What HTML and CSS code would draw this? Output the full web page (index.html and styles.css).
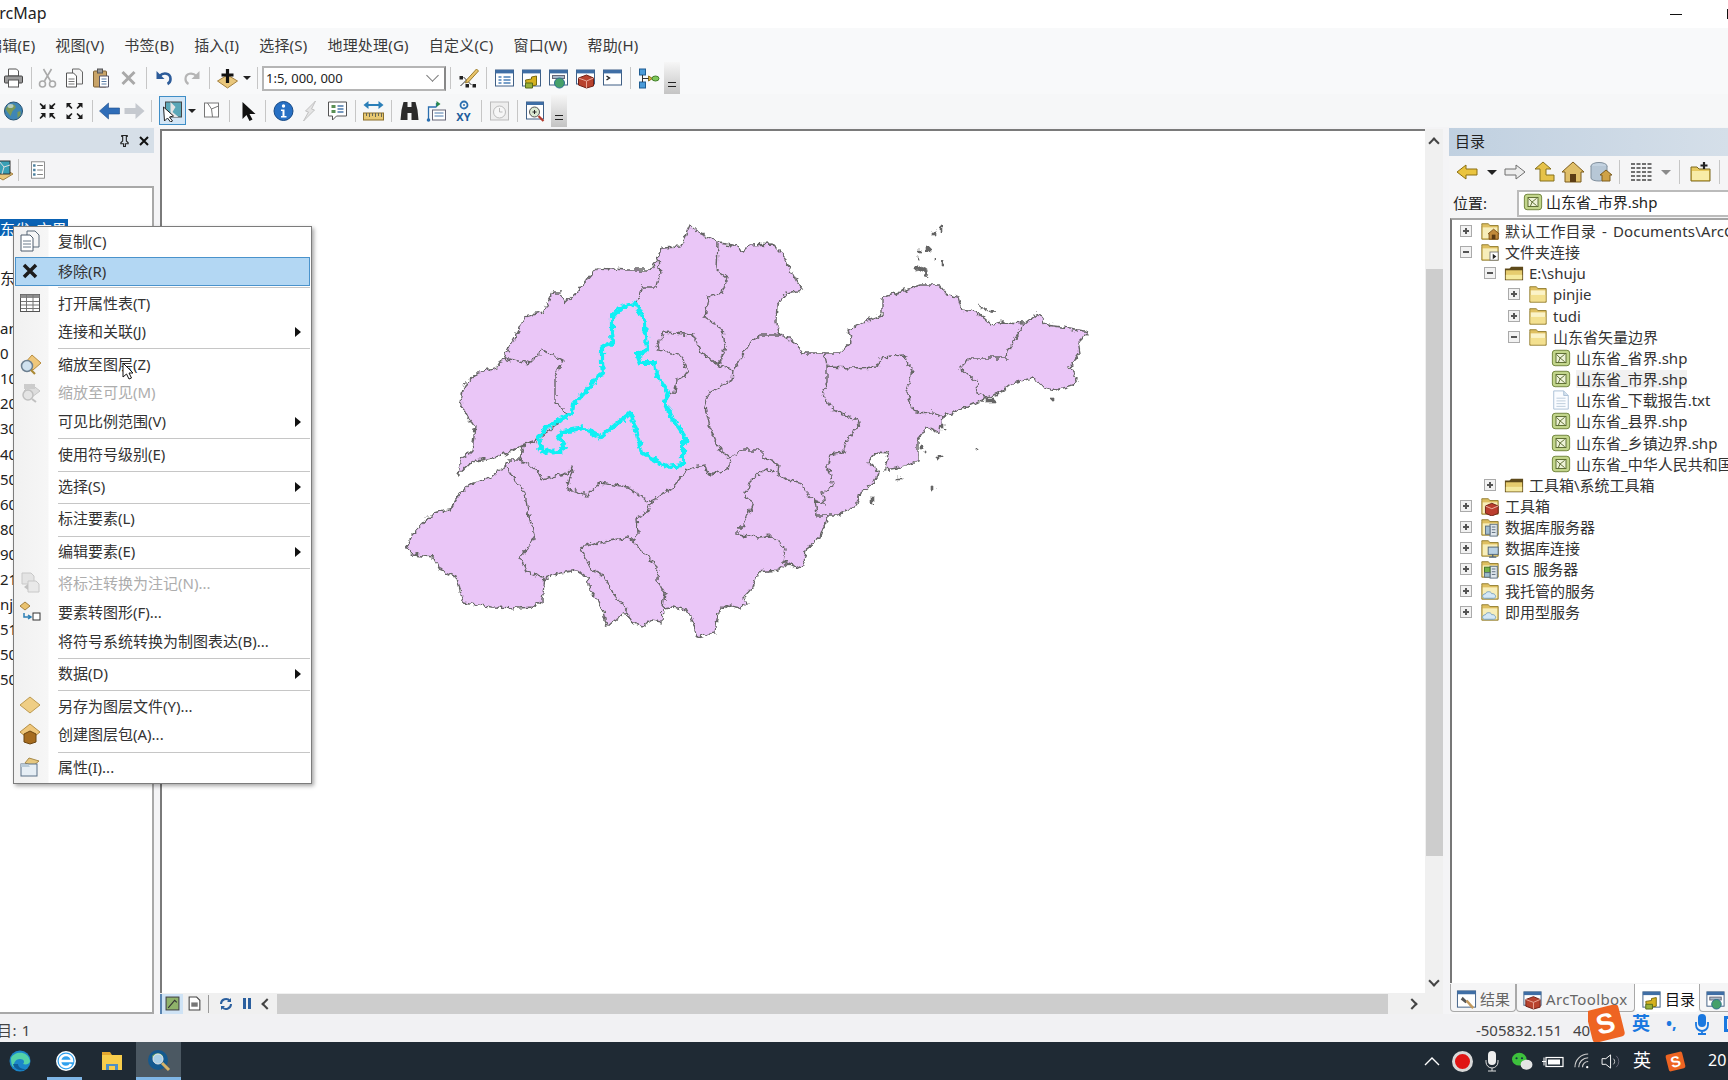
FILE: index.html
```html
<!DOCTYPE html>
<html lang="zh-CN">
<head>
<meta charset="utf-8">
<title>ArcMap</title>
<link rel="stylesheet" href="styles.css">
</head>
<body>
<svg class="defs" width="0" height="0" aria-hidden="true">
<defs>
<filter id="rough" x="-2%" y="-2%" width="104%" height="104%" color-interpolation-filters="sRGB"><feTurbulence type="fractalNoise" baseFrequency="0.2" numOctaves="2" seed="7" result="n"/><feDisplacementMap in="SourceGraphic" in2="n" scale="7" xChannelSelector="R" yChannelSelector="G"/><feGaussianBlur stdDeviation="0.35"/></filter>
<symbol id="print" viewBox="0 0 22 22"><path d="M6 2h8l2 2v5H6z" fill="#fff" stroke="#555"/><rect x="2" y="9" width="18" height="7" rx="1" fill="#9b9b9b" stroke="#444"/><rect x="6" y="13" width="10" height="7" fill="#fff" stroke="#555"/></symbol>
<symbol id="cut" viewBox="0 0 22 22"><path d="M7 2l7 12M15 2L8 14" stroke="#aaa" stroke-width="1.600" fill="none"/><circle cx="6" cy="17" r="3" fill="none" stroke="#aaa" stroke-width="1.600"/><circle cx="16" cy="17" r="3" fill="none" stroke="#aaa" stroke-width="1.600"/></symbol>
<symbol id="copy" viewBox="0 0 22 22"><path d="M9 2h7l3 3v12H9z" fill="#f4f4f4" stroke="#666"/><path d="M3 6h7l3 3v11H3z" fill="#fff" stroke="#555"/><path d="M5 12h6M5 14.500h6M5 17h6" stroke="#777"/></symbol>
<symbol id="paste" viewBox="0 0 22 22"><rect x="3" y="4" width="13" height="16" rx="1" fill="#c9a468" stroke="#7a5f35"/><rect x="7" y="2" width="5" height="4" fill="#999" stroke="#555"/><path d="M9 9h9v11H9z" fill="#fff" stroke="#556"/><path d="M11 12h5M11 14.500h5M11 17h5" stroke="#5b7da6"/></symbol>
<symbol id="del" viewBox="0 0 22 22"><path d="M5 5l12 12M17 5L5 17" stroke="#a9a9a9" stroke-width="3"/></symbol>
<symbol id="undo" viewBox="0 0 22 22"><path d="M6 9c4-4 11-3 11 3 0 2-1 4-3 5" fill="none" stroke="#2d5c9a" stroke-width="2.600"/><path d="M3 4v8h8z" fill="#2d5c9a"/></symbol>
<symbol id="redo" viewBox="0 0 22 22"><path d="M16 9c-4-4-11-3-11 3 0 2 1 4 3 5" fill="none" stroke="#b5b5b5" stroke-width="2.200"/><path d="M19 4v8h-8z" fill="#b5b5b5"/></symbol>
<symbol id="add" viewBox="0 0 22 22"><path d="M11 8l10 6-10 7L1 14z" fill="#e9c77c" stroke="#a5813f"/><path d="M11 2v14M5 8h12" stroke="#111" stroke-width="3.200"/></symbol>
<symbol id="edit" viewBox="0 0 22 22"><path d="M3 19L9 13l5 5M9 13l-3-3" stroke="#333" fill="none"/><rect x="2" y="9" width="3.500" height="3.500" fill="#222"/><rect x="8" y="17" width="3.500" height="3.500" fill="#222"/><rect x="15" y="17" width="3.500" height="3.500" fill="#222"/><path d="M19 2L9 13l-1 3 3-1L21 4z" fill="#e9c46a" stroke="#9b7d2e"/></symbol>
<symbol id="win1" viewBox="0 0 22 22"><rect x="2" y="3" width="18" height="16" fill="#fff" stroke="#3f5f85"/><rect x="2" y="3" width="18" height="3.400" fill="#3f6ea5"/><path d="M5 10h3M5 13h3M5 16h3M10 10h7M10 13h7M10 16h7" stroke="#4b80b8" stroke-width="1.400"/></symbol>
<symbol id="win2" viewBox="0 0 22 22"><rect x="2" y="3" width="18" height="16" fill="#fff" stroke="#3f5f85"/><rect x="2" y="3" width="18" height="3.400" fill="#3f6ea5"/><path d="M6 20l-1-7 6-1v-2l5-1v9z" fill="#d6b21e" stroke="#7a6b10"/><path d="M5 16h7v5H5z" fill="#97b13a" stroke="#566b1c"/></symbol>
<symbol id="win3" viewBox="0 0 22 22"><rect x="2" y="3" width="18" height="15" fill="#fff" stroke="#3f5f85"/><rect x="2" y="3" width="18" height="3.400" fill="#3f6ea5"/><rect x="5" y="8.500" width="12" height="3" fill="#a8b8c8" stroke="#667"/><circle cx="12" cy="16" r="5" fill="#45a06a" stroke="#2c6e8e"/></symbol>
<symbol id="win4" viewBox="0 0 22 22"><rect x="2" y="3" width="18" height="14" fill="#fff" stroke="#3f5f85"/><rect x="2" y="3" width="18" height="3.400" fill="#3f6ea5"/><path d="M4 11l8-3 7 3v8l-7 2-8-3z" fill="#b8432f" stroke="#6f2016"/><path d="M4 11l8 3 7-3M12 14v7" stroke="#e8a899" fill="none"/></symbol>
<symbol id="win5" viewBox="0 0 22 22"><rect x="2" y="3" width="18" height="15" fill="#fff" stroke="#3f5f85"/><rect x="2" y="3" width="18" height="3.400" fill="#3f6ea5"/><path d="M5 9l3 2-3 2" fill="none" stroke="#222" stroke-width="1.400"/></symbol>
<symbol id="model" viewBox="0 0 22 22"><rect x="2" y="2" width="6" height="6" fill="#4b9bd8" stroke="#1f5d92"/><rect x="2" y="15" width="6" height="6" fill="#4b9bd8" stroke="#1f5d92"/><path d="M11 9l4 2.500-4 2.500z" fill="#d9b53c" stroke="#8a6f1c"/><ellipse cx="18" cy="11.500" rx="3.500" ry="2.500" fill="#7ec75a" stroke="#43802a"/><path d="M5 8v7M5 11.500h6" stroke="#333"/></symbol>
<symbol id="globe" viewBox="0 0 22 22"><circle cx="11" cy="11" r="9" fill="#3f86b5" stroke="#25506f"/><path d="M6 5c4-2 8 0 7 3l-3 3-2 5-3-4-2-3zM15 12l3-1v4l-3 3z" fill="#7c9a57"/><ellipse cx="8" cy="6" rx="3" ry="2" fill="#cfe3ee" opacity=".7"/></symbol>
<symbol id="zin" viewBox="0 0 22 22"><path d="M9 9H4l1.800-1.800L3 4l1-1 3.200 2.800L9 4zM13 9h5l-1.800-1.800L19 4l-1-1-3.200 2.800L13 4zM9 13H4l1.800 1.800L3 18l1 1 3.200-2.800L9 18zM13 13h5l-1.800 1.800L19 18l-1 1-3.200-2.800L13 18z" fill="#1c1c1c"/></symbol>
<symbol id="zout" viewBox="0 0 22 22"><path d="M3 3h5L6.200 4.800 9 8 8 9 4.800 6.200 3 8zM19 3h-5l1.800 1.800L13 8l1 1 3.200-2.800L19 8zM3 19h5l-1.800-1.800L9 14l-1-1-3.200 2.800L3 14zM19 19h-5l1.800-1.800L13 14l1-1 3.200 2.800L19 14z" fill="#1c1c1c"/></symbol>
<symbol id="back" viewBox="0 0 22 22"><path d="M1 11l9-8v5h11v6H10v5z" fill="#2f6db8" stroke="#1f4f8c" stroke-width=".6"/></symbol>
<symbol id="fwd" viewBox="0 0 22 22"><path d="M21 11l-9-8v5H1v6h11v5z" fill="#c5c9cf"/></symbol>
<symbol id="seltool" viewBox="0 0 22 22"><rect x="4" y="2" width="16" height="15" fill="#5aa7b8" stroke="#444"/><path d="M9 2l5 5-3 5 6 5H9z" fill="#e5e5e5"/><path d="M2 7l1 14 3-3 3 4 2-1-3-4 4-1z" fill="#fff" stroke="#222"/></symbol>
<symbol id="mapi" viewBox="0 0 22 22"><rect x="4" y="3" width="14" height="14" fill="#fff" stroke="#777"/><path d="M7 3l4 6 1 8M11 9l7-3" stroke="#777" fill="none"/></symbol>
<symbol id="ptr" viewBox="0 0 22 22"><path d="M6 2v17l4-4 3 6 3-1.500-3-5.500h6z" fill="#111"/></symbol>
<symbol id="info" viewBox="0 0 22 22"><circle cx="11" cy="11" r="9.500" fill="#2770c4" stroke="#174a86"/><circle cx="11" cy="6" r="1.700" fill="#fff"/><path d="M8.500 9.500h3.500V16h2v1.500H8.500V16h1.500v-5H8.500z" fill="#fff"/></symbol>
<symbol id="bolt" viewBox="0 0 22 22"><path d="M16 1L6 11l3 1-5 9 11-11-3-1z" fill="#e4e4e4" stroke="#c2c2c2"/></symbol>
<symbol id="popup" viewBox="0 0 22 22"><path d="M2 2h18v14H10l-4 4v-4H2z" fill="#fff" stroke="#555"/><path d="M5 5h4v3H5zM5 10h4v3H5z" fill="#5a8f55"/><path d="M11 6h6M11 9h6M11 12h6" stroke="#4a78ab" stroke-width="1.300"/></symbol>
<symbol id="measure" viewBox="0 0 22 22"><path d="M1 5l5-4v3h10V1l5 4-5 4V6H6v3z" fill="#2b7fb8"/><rect x="1" y="13" width="20" height="7" fill="#e7c872" stroke="#8a6f2b"/><path d="M4 13v3M7 13v4M10 13v3M13 13v4M16 13v3M19 13v4" stroke="#665"/></symbol>
<symbol id="bino" viewBox="0 0 22 22"><path d="M3 10l2-8h4v18H2zM19 10l-2-8h-4v18h7zM9 7h4v6H9z" fill="#2b2b2b"/></symbol>
<symbol id="route" viewBox="0 0 22 22"><rect x="7" y="10" width="13" height="10" fill="#fff" stroke="#667"/><path d="M9 13h9M9 16h9" stroke="#4a78ab"/><path d="M3 20V7h8M11 7V3" stroke="#2b6fb0" stroke-width="1.300" fill="none"/><circle cx="3" cy="20" r="1.800" fill="#2b6fb0"/><path d="M11 1l4 3-4 3z" fill="#2b8a4a"/></symbol>
<symbol id="clock" viewBox="0 0 22 22"><rect x="2" y="2" width="18" height="18" fill="#eee" stroke="#bbb"/><circle cx="11" cy="12" r="6" fill="#f6f6f6" stroke="#bbb"/><path d="M11 8v4h3" stroke="#bbb" fill="none"/></symbol>
<symbol id="zmap" viewBox="0 0 22 22"><rect x="2" y="2" width="17" height="17" fill="#fff" stroke="#3f5f85"/><rect x="2" y="2" width="17" height="3" fill="#3f6ea5"/><circle cx="10" cy="12" r="5" fill="#dbe9d2" stroke="#555"/><path d="M8 12h4M10 10v4" stroke="#222"/><path d="M14 16l5 5" stroke="#b43b2d" stroke-width="2.200"/></symbol>
<symbol id="toc1" viewBox="0 0 22 22"><path d="M11 9l10 6-10 6L1 15z" fill="#e9c77c" stroke="#a5813f"/><rect x="4" y="2" width="14" height="13" fill="#3aa0b6" stroke="#333"/><path d="M7 2l5 6-2 7M12 8l6-2" stroke="#ddd" fill="none"/></symbol>
<symbol id="toc2" viewBox="0 0 22 22"><rect x="3" y="1" width="16" height="20" fill="#fff" stroke="#777"/><rect x="5" y="4" width="3" height="3" fill="#4a7f9e"/><rect x="5" y="9.500" width="3" height="3" fill="#4a7f9e"/><rect x="5" y="15" width="3" height="3" fill="#4a7f9e"/><path d="M10 5.500h7M10 11h7M10 16.500h7" stroke="#666"/></symbol>
<symbol id="m-copy" viewBox="0 0 22 22"><path d="M8 1h8l4 4v12H8z" fill="#f6f6f6" stroke="#5a6a7a"/><path d="M2 5h9l3 3v13H2z" fill="#fff" stroke="#4e5d6c"/><path d="M4 11h8M4 14h8M4 17h8" stroke="#6a7a8a"/></symbol>
<symbol id="m-x" viewBox="0 0 22 22"><path d="M5 5l12 12M17 5L5 17" stroke="#1c1c1c" stroke-width="3.500"/></symbol>
<symbol id="m-table" viewBox="0 0 22 22"><rect x="1.500" y="2.500" width="19" height="17" fill="#fff" stroke="#555"/><rect x="1.500" y="2.500" width="19" height="3.500" fill="#8e8e8e"/><path d="M7.500 3v16M14 3v16M2 9.500h18M2 13h18M2 16.500h18" stroke="#777"/></symbol>
<symbol id="m-zoom" viewBox="0 0 22 22"><path d="M13 2l9 8-8 7-8-7z" fill="#efc77b" stroke="#b88d3f"/><circle cx="8" cy="13" r="5.500" fill="#cfe1ef" stroke="#6c7f90" stroke-width="1.500"/><path d="M12 17l4 4" stroke="#a83" stroke-width="2.200"/></symbol>
<symbol id="m-zoomg" viewBox="0 0 22 22"><path d="M12 3l9 7-8 6-8-6z" fill="#ddd" stroke="#c6c6c6"/><rect x="5" y="3" width="11" height="5" fill="#ccc"/><circle cx="9" cy="14" r="5" fill="#e4e4e4" stroke="#c0c0c0" stroke-width="1.500"/><path d="M13 18l4 3" stroke="#c0c0c0" stroke-width="2"/></symbol>
<symbol id="m-conv" viewBox="0 0 22 22"><path d="M3 1h9l3 3v8H3z" fill="#e4e4e4" stroke="#c8c8c8"/><path d="M9 9h8l3 3v8H9z" fill="#e9e9e9" stroke="#c8c8c8"/><path d="M5 15l4-3v6z" fill="#c2c2c2"/></symbol>
<symbol id="m-graphic" viewBox="0 0 22 22"><path d="M6 1l5 4-5 4-5-4z" fill="#eac26e" stroke="#a5813f"/><rect x="14" y="12" width="7" height="7" fill="#fff" stroke="#333"/><path d="M5 12v4h7M9 14l3 2-3 2" fill="none" stroke="#2c7fb5" stroke-width="1.500"/></symbol>
<symbol id="m-lyr" viewBox="0 0 22 22"><path d="M11 2l10 8-10 8L1 10z" fill="#efce85" stroke="#bd9a50"/></symbol>
<symbol id="m-pkg" viewBox="0 0 22 22"><path d="M11 1l10 8-10 8L1 9z" fill="#efc77b" stroke="#b58e44"/><path d="M5 11l6-3 6 3v8l-6 2-6-2z" fill="#a66c1f" stroke="#6b4410"/></symbol>
<symbol id="m-prop" viewBox="0 0 22 22"><path d="M10 2l10 3-6 5L6 7z" fill="#e7c87f" stroke="#a88a4a"/><rect x="2" y="8" width="16" height="12" fill="#e6eef5" stroke="#5a7187"/><path d="M2 8h7l2 3H2z" fill="#b9cbd9"/></symbol>
<symbol id="fold" viewBox="0 0 22 22"><path d="M2 5V3h7l2 2h9v15H2z" fill="#dfc061" stroke="#8f7a2c"/><rect x="3" y="7" width="16" height="12" fill="#fbf3c8"/><rect x="3" y="12" width="16" height="7" fill="#f3e08f"/></symbol>
<symbol id="fold-home" viewBox="0 0 22 22"><path d="M2 5V3h7l2 2h9v15H2z" fill="#dfc061" stroke="#8f7a2c"/><rect x="3" y="7" width="16" height="12" fill="#f7eeba"/><path d="M15 9l6 5-1 0v6h-10v-6H9z" fill="#c18a3a" stroke="#7a4d16"/><rect x="13" y="15" width="4" height="5" fill="#5a3a12"/></symbol>
<symbol id="fold-link" viewBox="0 0 22 22"><path d="M2 5V3h7l2 2h9v15H2z" fill="#dfc061" stroke="#8f7a2c"/><rect x="3" y="7" width="16" height="12" fill="#f7eeba"/><rect x="11" y="11" width="9" height="9" fill="#fff" stroke="#777"/><path d="M14 13l4 3-4 3z" fill="#222"/></symbol>
<symbol id="fold-conn" viewBox="0 0 22 22"><path d="M1 6h5l2-2h13v15H1z" fill="#5e4a1a"/><path d="M2 8h18v10H2z" fill="#e6cc6e"/><path d="M2 13h18v5H2z" fill="#f5ea9f"/></symbol>
<symbol id="fold-tool" viewBox="0 0 22 22"><path d="M2 5V3h7l2 2h9v15H2z" fill="#dfc061" stroke="#8f7a2c"/><rect x="3" y="7" width="16" height="12" fill="#f7eeba"/><path d="M6 11l7-3 7 3v8l-7 3-7-3z" fill="#bb3e2e" stroke="#6a1e14"/><path d="M6 11l7 3 7-3" stroke="#eba" fill="none"/></symbol>
<symbol id="fold-srv" viewBox="0 0 22 22"><path d="M2 5V3h7l2 2h9v15H2z" fill="#dfc061" stroke="#8f7a2c"/><rect x="3" y="7" width="16" height="12" fill="#f7eeba"/><rect x="11" y="8" width="8" height="13" fill="#dfe6ec" stroke="#596b7c"/><path d="M13 11h4M13 14h4M13 17h4" stroke="#567"/><rect x="6" y="10" width="5" height="9" fill="#9fbcd0" stroke="#596b7c"/></symbol>
<symbol id="fold-db" viewBox="0 0 22 22"><path d="M2 5V3h7l2 2h9v15H2z" fill="#dfc061" stroke="#8f7a2c"/><rect x="3" y="7" width="16" height="12" fill="#f7eeba"/><rect x="9" y="10" width="11" height="8" fill="#b9d1e4" stroke="#4c6175"/><path d="M14 18v3M10 21h8" stroke="#4c6175" stroke-width="1.400"/></symbol>
<symbol id="fold-gis" viewBox="0 0 22 22"><path d="M2 5V3h7l2 2h9v15H2z" fill="#dfc061" stroke="#8f7a2c"/><rect x="3" y="7" width="16" height="12" fill="#f7eeba"/><rect x="11" y="8" width="8" height="13" fill="#dfe6ec" stroke="#596b7c"/><path d="M13 11h4M13 14h4M13 17h4" stroke="#567"/><rect x="5" y="9" width="6" height="6" fill="#74b14a" stroke="#3d6f20"/><rect x="5" y="15" width="6" height="5" fill="#9bbccc" stroke="#596b7c"/></symbol>
<symbol id="fold-cloud" viewBox="0 0 22 22"><path d="M2 5V3h7l2 2h9v15H2z" fill="#dfc061" stroke="#8f7a2c"/><rect x="3" y="7" width="16" height="12" fill="#f7eeba"/><path d="M5 19c-3 0-3-5 1-5 1-3 6-3 7 0 4-1 6 5 2 5z" fill="#d4e8f7" stroke="#6e9cc0"/></symbol>
<symbol id="shp" viewBox="0 0 22 22"><rect x="1.500" y="2.500" width="19" height="17" rx="3" fill="#c2d58b" stroke="#6a7f34"/><rect x="5.500" y="6" width="11" height="10" fill="#eef3d8" stroke="#55662a"/><path d="M6 7l4 4 5-4M10 11l-2 5M10 11l5 4" stroke="#55662a" fill="none"/></symbol>
<symbol id="txt" viewBox="0 0 22 22"><path d="M3 1h11l5 5v15H3z" fill="#fafcff" stroke="#a7bdd4"/><path d="M14 1v5h5" fill="#d4e2ef" stroke="#a7bdd4"/><path d="M6 9h10M6 12h10M6 15h10M6 18h10" stroke="#b8c9da"/></symbol>
<symbol id="c-back" viewBox="0 0 24 22"><path d="M2 11l9-7v4h11v6H11v4z" fill="#eac43f" stroke="#8b6f12"/></symbol>
<symbol id="c-fwd" viewBox="0 0 24 22"><path d="M22 11l-9-7v4H2v6h11v4z" fill="#ececec" stroke="#6e6e6e"/></symbol>
<symbol id="c-up" viewBox="0 0 24 22"><path d="M10 1l8 7h-5v6h8v6H7V8H2z" fill="#e6c24a" stroke="#85701c"/></symbol>
<symbol id="c-home" viewBox="0 0 24 22"><path d="M12 1l11 10h-3v10H4V11H1z" fill="#e0bf6a" stroke="#7c5c1c"/><rect x="9" y="13" width="6" height="8" fill="#5c3d14"/></symbol>
<symbol id="c-db" viewBox="0 0 24 22"><ellipse cx="10" cy="5" rx="8" ry="3.500" fill="#c3d2e0" stroke="#7f8e9c"/><path d="M2 5v12c0 4 16 4 16 0V5" fill="#b7c7d6" stroke="#7f8e9c"/><path d="M17 9l6 5h-2v6h-8v-6h-2z" fill="#cfa247" stroke="#7c5c1c"/></symbol>
<symbol id="c-grid" viewBox="0 0 24 22"><path d="M1 3h22M1 7h22M1 11h22M1 15h22M1 19h22" stroke="#707070" stroke-width="2" stroke-dasharray="4 1.500"/></symbol>
<symbol id="c-new" viewBox="0 0 24 22"><path d="M2 8V6h6l2 2h11v12H2z" fill="#e7c95f" stroke="#7c681c"/><rect x="3" y="10" width="17" height="9" fill="#f8eca7"/><path d="M15 1v7M11.500 4.500h7" stroke="#222" stroke-width="2.200"/></symbol>
<symbol id="t-res" viewBox="0 0 22 22"><rect x="1.500" y="2" width="19" height="17" fill="#fff" stroke="#3f5f85"/><rect x="1.500" y="2" width="19" height="3.500" fill="#3f6ea5"/><path d="M7 8l5 5-2 2-5-4z" fill="#555"/><path d="M11 12l7 8" stroke="#c39a5e" stroke-width="2.600"/></symbol>
</defs>
</svg>

<div class="app">
  <header class="titlebar"><span class="app-name">ArcMap</span><i class="win-min"></i><i class="win-max"></i></header>

  <nav class="menubar">
    <span>编辑(E)</span><span>视图(V)</span><span>书签(B)</span><span>插入(I)</span><span>选择(S)</span><span>地理处理(G)</span><span>自定义(C)</span><span>窗口(W)</span><span>帮助(H)</span>
  </nav>

  <div class="toolbar">
    <svg class="i"><use href="#print"/></svg><b class="sep"></b>
    <svg class="i"><use href="#cut"/></svg><svg class="i"><use href="#copy"/></svg><svg class="i"><use href="#paste"/></svg><svg class="i"><use href="#del"/></svg><b class="sep"></b>
    <svg class="i"><use href="#undo"/></svg><svg class="i"><use href="#redo"/></svg><b class="sep"></b>
    <svg class="i"><use href="#add"/></svg><em class="drop"></em><b class="sep"></b>
    <div class="scale">1:5, 000, 000<span class="chev"></span></div><b class="sep"></b>
    <svg class="i"><use href="#edit"/></svg><b class="sep"></b>
    <svg class="i"><use href="#win1"/></svg><svg class="i"><use href="#win2"/></svg><svg class="i"><use href="#win3"/></svg><svg class="i"><use href="#win4"/></svg><svg class="i"><use href="#win5"/></svg><b class="sep"></b>
    <svg class="i"><use href="#model"/></svg><span class="grip"></span>
  </div>

  <div class="toolbar second">
    <svg class="i"><use href="#globe"/></svg><b class="sep"></b>
    <svg class="i"><use href="#zin"/></svg><svg class="i"><use href="#zout"/></svg><b class="sep"></b>
    <svg class="i narrow"><use href="#back"/></svg><svg class="i narrow"><use href="#fwd"/></svg><b class="sep"></b>
    <span class="active"><svg class="i"><use href="#seltool"/></svg></span><em class="drop"></em><svg class="i"><use href="#mapi"/></svg><b class="sep"></b>
    <svg class="i"><use href="#ptr"/></svg><b class="sep"></b>
    <svg class="i"><use href="#info"/></svg><svg class="i"><use href="#bolt"/></svg><svg class="i"><use href="#popup"/></svg><b class="sep"></b>
    <svg class="i"><use href="#measure"/></svg><b class="sep"></b>
    <svg class="i"><use href="#bino"/></svg><svg class="i"><use href="#route"/></svg><span class="xy"><svg viewBox="0 0 22 10"><circle cx="11" cy="5" r="3.500" fill="none" stroke="#2b6fb0" stroke-width="1.800"/><circle cx="11" cy="5" r="1" fill="#2b6fb0"/></svg>XY</span><b class="sep"></b>
    <svg class="i"><use href="#clock"/></svg><b class="sep"></b>
    <svg class="i"><use href="#zmap"/></svg><span class="grip"></span>
  </div>

  <div class="main">
    <aside class="toc">
      <div class="toc-title"><svg class="pin" viewBox="0 0 12 14"><path d="M3 1h6v1H8v5l2 2v1H7v3H5v-3H2V9l2-2V2H3z" fill="none" stroke="#222" stroke-width="1.200"/></svg><svg class="close" viewBox="0 0 12 12"><path d="M2 2l8 8M10 2l-8 8" stroke="#111" stroke-width="2"/></svg></div>
      <div class="toc-tools"><svg class="tocicon"><use href="#toc1"/></svg><b class="sep"></b><svg class="tocicon list"><use href="#toc2"/></svg></div>
      <div class="toc-tree">
        <div class="sel">东省_市界</div>
        <div class="lab first">东省</div>
        <div class="lab blank">and</div>
        <div class="lab">0</div><div class="lab">10</div><div class="lab">20</div><div class="lab">30</div><div class="lab">40</div><div class="lab">50</div><div class="lab">60</div><div class="lab">80</div><div class="lab">90</div><div class="lab">21</div>
        <div class="lab">nji</div><div class="lab">51_</div><div class="lab">50_</div><div class="lab">50_</div>
      </div>
    </aside>

    <section class="mapwrap">
      <div class="maprow">
        <div class="canvas">
          <svg class="map" viewBox="162 131 1263 862">
            <g filter="url(#rough)">
              <path class="land" d="M407 548 412 535 433 513 450 510 457 498 468 485 490 478 497 472 505 467 508 460 520 460 522 450 525 445 497 457 472 462 458 475 461 458 472 452 475 427 468 418 460 402 465 385 478 373 497 368 503 358 515 337 525 317 543 312 548 302 553 293 560 293 565 303 577 292 597 268 627 270 650 270 658 260 662 248 680 247 690 225 700 233 715 240 718 243 733 245 743 252 750 245 773 244 782 253 792 273 797 282 803 290 787 293 777 305 776 323 780 335 790 338 795 342 803 353 817 353 840 353 852 342 848 330 863 322 882 315 882 298 900 292 920 285 940 285 948 295 958 297 962 310 977 312 992 325 1002 322 1025 323 1038 313 1047 325 1070 328 1088 332 1078 342 1080 353 1070 367 1077 380 1073 385 1057 390 1043 387 1037 380 1032 378 1013 383 1000 393 987 397 978 402 942 417 940 433 927 427 918 440 918 462 897 468 885 470 888 453 877 452 868 462 880 472 873 483 860 493 857 505 838 515 828 515 820 537 807 548 803 565 797 568 787 563 778 570 758 572 753 587 743 598 748 603 740 608 727 605 718 612 715 633 697 637 693 622 687 610 673 607 663 608 662 622 652 620 642 627 632 622 627 612 615 620 607 627 603 612 598 600 590 590 588 578 577 570 560 573 545 578 542 600 533 607 518 608 493 607 463 603 457 577 440 570 433 557 413 555Z"/>
              <path class="border" d="M505 467 525 493 528 513 535 538 520 558 527 572 543 578M503 358 530 363 543 350 563 360 555 377 555 402 568 415 537 440 523 445M522 450 520 460 537 470 542 480 567 473 573 468 567 488 587 495 600 483 627 487 650 503 673 487 687 470 693 467 705 465 708 475 728 470 730 460M650 503 648 512 637 518 638 535 633 542 658 567 657 580 665 593 663 608M635 543 628 537 580 547 592 570 603 575 613 593 628 612M730 458 743 450 762 450 762 458 778 463 777 473 787 480 800 482 807 493 815 500 817 515 828 515M775 472 763 470 750 482 745 497 753 502 745 523 737 530 737 535 760 537 770 535 785 548 783 562 787 563M815 500 825 503 822 493 833 485 828 465 830 455 843 452 847 440 860 423 857 420 833 410 822 392 827 383 827 367 825 355 823 353M827 367 853 368 877 367 882 357 903 355 912 370 907 393 915 413 933 412 942 417M1025 323 1008 350 1007 358 970 358 960 368 977 383 978 393 987 397M718 243 717 270 727 278 722 293 708 297 705 317 723 330 725 347 720 362 717 365 733 370 732 380 710 392 705 407 710 427 720 450 730 458M780 335 760 335 750 343 740 360 733 370M637 303 642 287 657 287 660 273 658 260M657 345 665 332 693 335 700 350 717 365M657 345 658 350 680 355 688 373 677 380 675 392 667 393"/>
              <path class="islands" d="M940 226h2v6h-2zM932 232h4v3h-4zM926 246h4v6h-4zM918 250h2v2h-2zM918 257h1v4h-1zM935 257h1v3h-1zM941 261h2v3h-2zM915 268l7-2 4 2 2 8-3-1-3-5-7 1zM1051 398h3v3h-3zM977 448h1v3h-1zM938 456h3v2h-3zM931 486h3v3h-3zM871 497h3v7h-3zM897 478h5v2h-5zM925 451h2v2h-2zM920 446h2v3h-2zM941 424h3v3h-3zM944 429h2v2h-2zM986 398h8v5h-8zM978 305l7 3 3 3-5-2zM990 311h4l-3 3z"/>
              <path class="selection" d="M635 303 620 308 612 317 612 333 613 343 602 347 602 363 603 373 597 377 593 383 573 405 572 413 547 427 538 438 542 453 550 450 557 453 565 447 558 437 563 432 583 428 600 437 613 427 630 413 635 427 642 453 667 467 683 465 683 443 687 440 673 420 665 403 668 392 657 375 655 363 640 363 637 355 647 350 645 323 638 308Z"/>
            </g>
          </svg>
        </div>
        <div class="vscroll"><span class="arr up"></span><span class="thumb"></span><span class="arr down"></span></div>
      </div>
      <div class="mapbar">
        <span class="viewbtn on"><svg viewBox="0 0 14 14"><rect x="1" y="1" width="12" height="12" fill="#8fb26a" stroke="#444"/><path d="M3 11l6-7 2 2" stroke="#333" fill="none"/></svg></span>
        <span class="viewbtn"><svg viewBox="0 0 14 14"><path d="M2 1h7l3 3v9H2z" fill="#fff" stroke="#444"/><rect x="4" y="6" width="6" height="4" fill="#777"/></svg></span>
        <b class="sep tall"></b>
        <svg class="refresh" viewBox="0 0 14 14"><path d="M2 7a5 5 0 0 1 9-3M12 7a5 5 0 0 1-9 3" fill="none" stroke="#2b5f9e" stroke-width="2"/><path d="M12 1v4H8zM2 13V9h4z" fill="#2b5f9e"/></svg>
        <span class="pause"></span>
        <span class="harr left"></span>
        <span class="hthumb"></span>
        <span class="harr right"></span>
      </div>
    </section>

    <aside class="catalog">
      <div class="cat-title">目录</div>
      <div class="cat-tools">
        <svg class="c"><use href="#c-back"/></svg><em class="cdrop"></em><svg class="c"><use href="#c-fwd"/></svg><svg class="c up"><use href="#c-up"/></svg><svg class="c"><use href="#c-home"/></svg><svg class="c"><use href="#c-db"/></svg><b class="sep"></b><svg class="c grid"><use href="#c-grid"/></svg><em class="cdrop gray"></em><b class="sep"></b><svg class="c newf"><use href="#c-new"/></svg><b class="sep"></b>
      </div>
      <div class="cat-loc"><label>位置:</label><div class="locfield"><svg class="ti"><use href="#shp"/></svg>山东省_市界.shp</div></div>
      <div class="cat-tree">
        <div class="row l0 wide"><i class="ex plus"></i><svg class="ti"><use href="#fold-home"/></svg>默认工作目录 - Documents\ArcGIS</div>
        <div class="row l0"><i class="ex"></i><svg class="ti"><use href="#fold-link"/></svg>文件夹连接</div>
        <div class="row l1"><i class="ex"></i><svg class="ti"><use href="#fold-conn"/></svg>E:\shuju</div>
        <div class="row l2"><i class="ex plus"></i><svg class="ti"><use href="#fold"/></svg>pinjie</div>
        <div class="row l2"><i class="ex plus"></i><svg class="ti"><use href="#fold"/></svg>tudi</div>
        <div class="row l2"><i class="ex"></i><svg class="ti"><use href="#fold"/></svg>山东省矢量边界</div>
        <div class="row l3"><svg class="ti"><use href="#shp"/></svg>山东省_省界.shp</div>
        <div class="row l3"><svg class="ti"><use href="#shp"/></svg><span class="hl">山东省_市界.shp</span></div>
        <div class="row l3"><svg class="ti"><use href="#txt"/></svg>山东省_下载报告.txt</div>
        <div class="row l3"><svg class="ti"><use href="#shp"/></svg>山东省_县界.shp</div>
        <div class="row l3"><svg class="ti"><use href="#shp"/></svg>山东省_乡镇边界.shp</div>
        <div class="row l3"><svg class="ti"><use href="#shp"/></svg>山东省_中华人民共和国.shp</div>
        <div class="row l1"><i class="ex plus"></i><svg class="ti"><use href="#fold-conn"/></svg>工具箱\系统工具箱</div>
        <div class="row l0"><i class="ex plus"></i><svg class="ti"><use href="#fold-tool"/></svg>工具箱</div>
        <div class="row l0"><i class="ex plus"></i><svg class="ti"><use href="#fold-srv"/></svg>数据库服务器</div>
        <div class="row l0"><i class="ex plus"></i><svg class="ti"><use href="#fold-db"/></svg>数据库连接</div>
        <div class="row l0"><i class="ex plus"></i><svg class="ti"><use href="#fold-gis"/></svg>GIS 服务器</div>
        <div class="row l0"><i class="ex plus"></i><svg class="ti"><use href="#fold-cloud"/></svg>我托管的服务</div>
        <div class="row l0"><i class="ex plus"></i><svg class="ti"><use href="#fold-cloud"/></svg>即用型服务</div>
      </div>
      <div class="cat-tabs">
        <span class="tab t-res"><svg class="ti"><use href="#t-res"/></svg>结果</span>
        <span class="tab t-box"><svg class="ti"><use href="#win4"/></svg>ArcToolbox</span>
        <span class="tab cur"><svg class="ti"><use href="#win2"/></svg>目录</span>
        <span class="tab t-last"><svg class="ti"><use href="#win3"/></svg></span>
      </div>
    </aside>
  </div>

  <footer class="status"><span class="st-left">目: 1</span><span class="st-coord">-505832.151</span><span class="st-y">40</span></footer>

  <div class="taskbar">
    <span class="tk first"><svg viewBox="0 0 24 24"><circle cx="12" cy="12" r="10.500" fill="#1b86c9"/><path d="M3 9c3-7 17-8 19 3 0 3-4 4-7 3 2-2 1-5-3-5-5 0-7 5-6 8-2 0-3-4-3-9z" fill="#53d2a8"/><path d="M5 15c1 5 8 8 13 5-5 0-8-2-8-5z" fill="#0e5d99"/></svg></span>
    <span class="tk ul"><svg viewBox="0 0 24 24"><circle cx="12" cy="12" r="10" fill="#fff"/><circle cx="12" cy="12" r="8.500" fill="#2fa0ee"/><path d="M6 12h12c0-4-3-6-6-6s-6 2-6 6 3 6 6 6c2 0 4-1 5-3" fill="none" stroke="#fff" stroke-width="2.600"/></svg></span>
    <span class="tk"><svg viewBox="0 0 24 24"><path d="M2 6V3h8l2 3z" fill="#e4a72e"/><rect x="2" y="6" width="20" height="15" fill="#f7cd4c"/><rect x="6" y="15" width="12" height="6" fill="#4d8fc4"/><rect x="9" y="17" width="6" height="4" fill="#f7cd4c"/></svg></span>
    <span class="tk cur"><svg viewBox="0 0 24 24"><circle cx="11" cy="11" r="10" fill="#14598f"/><path d="M5 7c4-4 9-3 11 0l-3 3-2 5-4-3z" fill="#6fa968"/><circle cx="11" cy="10" r="5" fill="#a9cfe6" stroke="#e6e6e6"/><path d="M15 14l7 7" stroke="#d7b368" stroke-width="3"/></svg></span>
    <span class="tray">
      <svg class="t-caret" viewBox="0 0 16 10"><path d="M1 9l7-7 7 7" fill="none" stroke="#fff" stroke-width="1.400"/></svg>
      <span class="t-rec"></span>
      <svg class="t-mic" viewBox="0 0 16 22"><rect x="4" y="1" width="8" height="14" rx="4" fill="#eee"/><path d="M2 10v2a6 6 0 0 0 12 0v-2M8 18v3M4 21h8" fill="none" stroke="#ddd"/></svg>
      <svg class="t-wc" viewBox="0 0 24 22"><ellipse cx="9" cy="9" rx="8" ry="7" fill="#3dc03c"/><circle cx="6" cy="8" r="1.200" fill="#134"/><circle cx="12" cy="8" r="1.200" fill="#134"/><ellipse cx="17" cy="15" rx="6.500" ry="5.500" fill="#e4e4e4"/></svg>
      <svg class="t-bat" viewBox="0 0 22 12"><rect x="4" y="2" width="17" height="9" fill="none" stroke="#fff" stroke-width="1.200"/><rect x="6" y="4" width="12" height="5" fill="#fff"/><path d="M0 6h4M2 2v8" stroke="#fff"/></svg>
      <svg class="t-wifi" viewBox="0 0 18 18"><path d="M1 15a14 14 0 0 1 14-14M5 15a10 10 0 0 1 10-10M9 15a6 6 0 0 1 6-6" fill="none" stroke="#ccc" stroke-width="1.200"/><circle cx="14" cy="15" r="1.200" fill="#fff"/></svg>
      <svg class="t-vol" viewBox="0 0 22 18"><path d="M1 6h4l5-4v14l-5-4H1z" fill="none" stroke="#fff"/><path d="M13 6a4 4 0 0 1 0 6" fill="none" stroke="#ccc"/><path d="M16 3a8 8 0 0 1 0 12" fill="none" stroke="#667"/></svg>
      <span class="t-lang">英</span>
      <span class="sogou small">S</span>
      <span class="t-clock">20</span>
    </span>
  </div>
</div>

<div class="ctx">
  <div class="mi"><svg class="mic"><use href="#m-copy"/></svg>复制(C)</div>
  <div class="mi hot"><svg class="mic"><use href="#m-x"/></svg>移除(R)</div><hr>
  <div class="mi"><svg class="mic"><use href="#m-table"/></svg>打开属性表(T)</div>
  <div class="mi sub"><span class="mic"></span>连接和关联(J)</div><hr>
  <div class="mi"><svg class="mic"><use href="#m-zoom"/></svg>缩放至图层(Z)</div>
  <div class="mi off"><svg class="mic"><use href="#m-zoomg"/></svg>缩放至可见(M)</div>
  <div class="mi sub"><span class="mic"></span>可见比例范围(V)</div><hr>
  <div class="mi"><span class="mic"></span>使用符号级别(E)</div><hr>
  <div class="mi sub"><span class="mic"></span>选择(S)</div><hr>
  <div class="mi"><span class="mic"></span>标注要素(L)</div><hr>
  <div class="mi sub"><span class="mic"></span>编辑要素(E)</div><hr>
  <div class="mi off"><svg class="mic"><use href="#m-conv"/></svg>将标注转换为注记(N)...</div>
  <div class="mi"><svg class="mic"><use href="#m-graphic"/></svg>要素转图形(F)...</div>
  <div class="mi"><span class="mic"></span>将符号系统转换为制图表达(B)...</div><hr>
  <div class="mi sub"><span class="mic"></span>数据(D)</div><hr>
  <div class="mi"><svg class="mic"><use href="#m-lyr"/></svg>另存为图层文件(Y)...</div>
  <div class="mi"><svg class="mic"><use href="#m-pkg"/></svg>创建图层包(A)...</div><hr>
  <div class="mi"><svg class="mic"><use href="#m-prop"/></svg>属性(I)...</div>
</div>

<svg class="cursor" viewBox="0 0 12 18"><path d="M1 1v14l3.500-3 2.500 5 2.500-1-2.500-5H11z" fill="#fff" stroke="#111"/></svg>

<div class="ime">
  <span class="sogou">S</span>
  <span class="ime-lang">英</span>
  <span class="ime-punc">•,</span>
  <svg class="ime-mic" viewBox="0 0 16 22"><rect x="4" y="1" width="8" height="13" rx="4" fill="#1a78e0"/><path d="M2 9v3a6 6 0 0 0 12 0V9M8 18v3M4 21h8" fill="none" stroke="#1a78e0" stroke-width="1.800"/></svg>
  <span class="ime-last"></span>
</div>
</body>
</html>
```
FILE: styles.css
```css
* { box-sizing: border-box; }
html, body { margin: 0; height: 100%; }
body {
  width: 1728px; height: 1080px; overflow: hidden; position: relative;
  font: 15px/1.2 "Noto Sans", "Noto Sans CJK SC", sans-serif; color: #333; background: #f4f4f6;
}
.defs { position: absolute; }
.app { display: flex; flex-direction: column; width: 1728px; height: 1080px; }

/* title */
.titlebar { height: 28px; flex: none; background: #fff; display: flex; align-items: center; overflow: hidden; }
.app-name { margin-left: -11px; font-size: 16px; color: #222; }
.win-min { margin-left: auto; width: 12px; height: 1px; background: #111; }
.win-max { width: 10px; height: 10px; border: 1px solid #111; margin-left: 45px; margin-right: -9px; }

/* menu */
.menubar { height: 34px; flex: none; background: #f8f9fa; display: flex; align-items: center; gap: 20px; }
.menubar span { white-space: nowrap; color: #3a3a3a; letter-spacing: .2px; }
.menubar span:first-child { margin-left: -13px; }

/* toolbars */
.toolbar { height: 32px; flex: none; background: #f8f9fa; display: flex; align-items: center; }
.toolbar.second { height: 33px; background: #f6f7f8; }
.i { width: 27px; height: 22px; flex: none; }
.i.narrow { width: 25px; }
.sep { display: block; width: 1px; height: 22px; background: #c6c6c6; margin: 0 4px; flex: none; }
.toolbar .sep:first-of-type { margin-right: 2px; }
.drop { width: 12px; height: 22px; flex: none; position: relative; display: block; }
.drop::after { content: ""; position: absolute; left: 2px; top: 9px; border: 4px solid transparent; border-top: 4px solid #222; }
.scale { width: 184px; height: 25px; flex: none; background: #fff; border: 2px solid #b5b5b5; border-right-color: #888; padding-left: 2px; font-size: 13px; line-height: 21px; color: #222; display: flex; justify-content: space-between; }
.chev { width: 9px; height: 9px; border: solid #777; border-width: 0 1.500px 1.500px 0; transform: rotate(45deg); margin: 3px 7px 0 0; }
.grip { width: 16px; height: 32px; margin-left: 2px; align-self: flex-end; background: linear-gradient(#f6f6f6, #c4c4c4); position: relative; }
.grip::after { content: ""; position: absolute; left: 4px; bottom: 7px; width: 8px; height: 3px; border-top: 1px solid #222; border-bottom: 1px solid #222; }
.active { display: flex; width: 27px; height: 29px; margin-left: 3px; border: 1px solid #3f8ec7; background: #d3e6f6; align-items: center; justify-content: center; flex: none; }
.active .i { width: 23px; }
.xy { width: 27px; flex: none; text-align: center; color: #1f5c9c; font: 700 11px/11px "Noto Sans", sans-serif; }
.xy svg { display: block; width: 22px; height: 10px; margin: 0 auto 1px; }

/* main */
.main { flex: 1; min-height: 0; display: flex; }
.toc { width: 154px; flex: none; margin-right: 6px; display: flex; flex-direction: column; padding-top: 1px; }
.toc-title { height: 25px; flex: none; background: #d6dfe8; display: flex; align-items: center; justify-content: flex-end; gap: 8px; padding-right: 4px; }
.pin { width: 11px; height: 14px; }
.close { width: 12px; height: 12px; }
.toc-tools { height: 33px; flex: none; display: flex; align-items: center; }
.tocicon { width: 22px; height: 22px; flex: none; }
.tocicon:first-child { margin-left: -8px; }
.tocicon.list { width: 18px; height: 18px; margin-left: 6px; }
.toc .sep { margin: 0 4px; }
.toc-tree { flex: 1; background: #fff; border: 2px solid #a8a8a8; border-left: 0; overflow: hidden; width: 154px; line-height: 25.100px; color: #222; padding-top: 31px; }
.sel { width: 68px; height: 17px; line-height: 21px; background: #0a62b4; color: #fff; overflow: hidden; white-space: nowrap; }
.lab { height: 25.100px; white-space: nowrap; }
.lab.first { margin-top: 30px; }
.lab.blank { margin-top: 25px; }

/* map */
.mapwrap { flex: 1; min-width: 0; display: flex; flex-direction: column; padding-top: 2px; }
.maprow { height: 864px; flex: none; display: flex; }
.canvas { width: 1265px; height: 864px; flex: none; background: #fff; border-top: 2px solid #7a7a7a; border-left: 2px solid #7a7a7a; }
.map { display: block; width: 1263px; height: 862px; }
.land { fill: #eac6f7; stroke: #666; stroke-width: 1.400; }
.border { fill: none; stroke: #666; stroke-width: 1.400; }
.islands { fill: #666; stroke: #666; stroke-width: .6; }
.selection { fill: none; stroke: #0ff0f4; stroke-width: 4.200; stroke-linejoin: round; }
.vscroll { width: 18px; flex: none; background: #f0f0f0; display: flex; flex-direction: column; align-items: center; }
.arr { width: 8px; height: 8px; border: solid #444; border-width: 2px 0 0 2px; flex: none; }
.arr.up { transform: rotate(45deg); margin-top: 10px; }
.arr.down { transform: rotate(225deg); margin-bottom: 8px; }
.vscroll .thumb { width: 17px; background: #cdcdcd; height: 587px; flex: none; margin: 122px 0 auto; }
.mapbar { height: 21px; flex: none; display: flex; align-items: center; background: #f0f0f0; width: 1283px; }
.viewbtn { width: 23px; height: 20px; display: flex; align-items: center; justify-content: center; flex: none; }
.viewbtn.on { background: #cfe3f5; border-left: 2px solid #5a84b0; }
.viewbtn svg { width: 15px; height: 15px; }
.sep.tall { height: 18px; background: #999; margin: 0 10px 0 2px; }
.refresh { width: 14px; height: 14px; flex: none; }
.pause { width: 8px; height: 11px; margin-left: 10px; border: solid #2b5f9e; border-width: 0 3px; flex: none; }
.harr { width: 8px; height: 8px; border: solid #444; border-width: 2px 0 0 2px; flex: none; }
.harr.left { transform: rotate(-45deg); margin-left: 12px; }
.hthumb { width: 1111px; height: 20px; margin-left: 6px; background: #cdcdcd; flex: none; }
.harr.right { transform: rotate(135deg); margin-left: 20px; }

/* catalog */
.catalog { width: 279px; flex: none; margin-left: 6px; display: flex; flex-direction: column; background: #f5f5f6; padding-top: 1px; }
.cat-title { height: 28px; flex: none; background: linear-gradient(90deg, #c0d0e0, #d5dfe9); padding-left: 6px; line-height: 27px; color: #222; }
.cat-tools { height: 32px; flex: none; display: flex; align-items: center; padding-left: 4px; }
.c { width: 28px; height: 22px; flex: none; }
.c.up { margin-left: 2px; }
.c.grid { width: 26px; margin-left: 5px; }
.c.newf { margin-left: 3px; }
.cat-tools .sep { margin: 0 4px; height: 24px; }
.cdrop { width: 20px; height: 22px; position: relative; display: block; flex: none; }
.cdrop::after { content: ""; position: absolute; left: 6px; top: 9px; border: 5px solid transparent; border-top: 5px solid #222; }
.cdrop.gray::after { border-top-color: #8a8a8a; }
.cat-loc { height: 30px; flex: none; display: flex; align-items: center; padding-left: 4px; }
.cat-loc label { width: 64px; flex: none; color: #222; }
.locfield { flex: 1; height: 27px; display: flex; align-items: center; background: #fff; border: 2px solid #bbb; border-right: 0; padding: 0 0 2px 4px; white-space: nowrap; color: #222; }
.locfield .ti { margin-right: 3px; }
.ti { width: 20px; height: 20px; flex: none; margin-right: 5px; }
.cat-tree { height: 765px; flex: none; background: #fff; border-left: 2px solid #777; border-top: 2px solid #a5a5a5; overflow: hidden; margin-left: 1px; padding-top: .4px; }
.row { height: 21.170px; display: flex; align-items: center; white-space: nowrap; color: #333; }
.row.wide { word-spacing: 2px; letter-spacing: .15px; }
.row.l0 { padding-left: 8px; }
.row.l1 { padding-left: 32px; }
.row.l2 { padding-left: 56px; }
.row.l3 { padding-left: 99px; }
.ex { width: 12px; height: 12px; border: 1px solid #aaa; background: #f2f2f2; margin-right: 8px; flex: none; position: relative; }
.ex::before { content: ""; position: absolute; left: 2px; top: 4px; width: 6px; height: 2px; background: #555; }
.ex.plus::after { content: ""; position: absolute; left: 4px; top: 2px; width: 2px; height: 6px; background: #555; }
.hl { background: #f1f1f1; }
.cat-tabs { height: 30px; flex: 1; display: flex; align-items: flex-start; padding: 1px 0 0 1px; overflow: hidden; }
.tab { display: flex; align-items: center; height: 28px; padding: 3px 3px 0 5px; white-space: nowrap; color: #666; border: solid #a9a9a9; border-width: 0 1px 1px 1px; border-radius: 0 0 4px 4px; flex: none; }
.tab .ti { width: 21px; height: 21px; margin-right: 3px; }
.tab.t-res { width: 66px; }
.tab.t-box { width: 119px; letter-spacing: .35px; }
.tab.cur { width: 64px; background: #fff; color: #111; border-color: transparent; }
.tab.t-last { width: 40px; }

/* status */
.status { height: 28px; flex: none; background: #f1f1f3; display: flex; align-items: center; color: #444; padding-top: 4px; }
.st-left { margin-left: -3px; letter-spacing: .6px; }
.st-coord { margin-left: 1445px; }
.st-y { margin-left: 11px; }

/* taskbar */
.taskbar { height: 38px; flex: none; background: #1f2a34; display: flex; align-items: center; }
.tk { width: 45px; height: 38px; display: flex; align-items: center; justify-content: center; margin-left: 1px; position: relative; flex: none; }
.tk.first { margin-left: -3px; }
.tk svg { width: 24px; height: 24px; }
.tk.ul::after { content: ""; position: absolute; left: 4px; right: 6px; bottom: 0; height: 3px; background: #7fb6e6; }
.tk.cur { background: #4b5862; margin-left: 2px; }
.tk.cur::after { content: ""; position: absolute; left: 0; right: 0; bottom: 0; height: 3px; background: #7fb6e6; }
.tray { margin-left: auto; display: flex; align-items: center; height: 38px; width: 304px; overflow: hidden; color: #fff; }
.t-caret { width: 16px; height: 10px; flex: none; }
.t-rec { width: 21px; height: 21px; border-radius: 50%; background: #e01414; border: 3px solid #d8d8d8; margin-left: 12px; flex: none; }
.t-mic { width: 16px; height: 22px; margin-left: 11px; flex: none; }
.t-wc { width: 22px; height: 20px; margin-left: 11px; flex: none; }
.t-bat { width: 22px; height: 13px; margin-left: 9px; flex: none; }
.t-wifi { width: 17px; height: 17px; margin-left: 10px; flex: none; }
.t-vol { width: 21px; height: 17px; margin-left: 10px; flex: none; }
.t-lang { margin-left: 11px; font-size: 18px; flex: none; }
.sogou { display: inline-flex; align-items: center; justify-content: center; width: 33px; height: 33px; background: #ee6422; color: #fff; font: 700 28px/1 "Liberation Sans", sans-serif; border-radius: 4px; transform: rotate(-14deg); flex: none; }
.sogou.small { width: 17px; height: 17px; font-size: 15px; margin-left: 16px; border-radius: 2px; }
.t-clock { margin-left: 24px; font-size: 16px; white-space: nowrap; flex: none; }

/* context menu */
.ctx { position: absolute; left: 13px; top: 226px; width: 299px; height: 558px; background: linear-gradient(90deg, #f1f1f1 0, #f6f6f6 34px, #fff 35px); border: 1px solid #7c7c7c; box-shadow: 2px 2px 4px rgba(0,0,0,.35); padding: 1.500px 1px; color: #333; }
.mi { height: 28.700px; display: flex; align-items: center; white-space: nowrap; position: relative; padding-bottom: 3px; }
.mi.hot { padding-bottom: 2px; }
.mic { width: 24px; height: 22px; margin: 0 16px 0 3px; flex: none; }
.mi.hot .mic { margin-left: 2px; }
.mi.hot { background: #b3d7f3; border: 1px solid #4a93cc; }
.mi.off { color: #adadad; }
.mi.sub::after { content: ""; position: absolute; right: 9px; top: 9px; border: 5px solid transparent; border-left: 6px solid #111; border-right: 0; }
.ctx hr { margin: 1.400px 0 1.400px 43px; border: 0; height: 1px; background: #c6c6c6; }
.cursor { position: absolute; left: 122px; top: 362px; width: 12px; height: 18px; }

/* IME */
.ime { position: absolute; left: 1588px; top: 1005px; width: 140px; height: 37px; display: flex; align-items: center; overflow: hidden; }
.ime .sogou { margin-left: 1px; }
.ime-lang { margin-left: 10px; color: #1a78e0; font-size: 18px; font-weight: 700; flex: none; }
.ime-punc { margin-left: 16px; color: #1a78e0; font-size: 16px; font-weight: 700; flex: none; }
.ime-mic { width: 16px; height: 22px; margin-left: 17px; flex: none; }
.ime-last { width: 16px; height: 16px; margin-left: 14px; border: 3px solid #1a78e0; flex: none; }
```
